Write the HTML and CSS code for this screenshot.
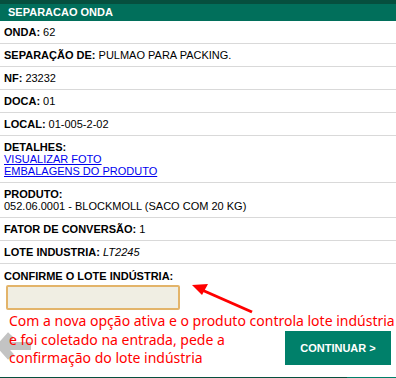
FILE: index.html
```html
<!DOCTYPE html>
<html lang="pt-BR">
<head>
    <meta charset="UTF-8">
    <title>Separação Onda</title>
    <link rel="stylesheet" href="styles.css">
</head>
<body>
    <div class="page">
        <div class="topo"></div>
        <div class="titulo">SEPARACAO ONDA</div>

        <div class="linha"><b>ONDA:</b> 62</div>
        <div class="linha"><b>SEPARAÇÃO DE:</b> PULMAO PARA PACKING.</div>
        <div class="linha"><b>NF:</b> 23232</div>
        <div class="linha"><b>DOCA:</b> 01</div>
        <div class="linha"><b>LOCAL:</b> 01-005-2-02</div>
        <div class="linha">
            <b>DETALHES:</b><br>
            <a href="#">VISUALIZAR FOTO</a><br>
            <a href="#">EMBALAGENS DO PRODUTO</a>
        </div>
        <div class="linha"><b>PRODUTO:</b><br>052.06.0001 - BLOCKMOLL (SACO COM 20 KG)</div>
        <div class="linha"><b>FATOR DE CONVERSÃO:</b> 1</div>
        <div class="linha"><b>LOTE INDUSTRIA:</b> <i>LT2245</i></div>
        <div class="confirma">
            <b>CONFIRME O LOTE INDÚSTRIA:</b>
            <input type="text" class="campo">
        </div>

        <div class="rodape">
            <svg class="voltar" width="36" height="30" viewBox="0 0 36 30">
                <polyline points="15,4 5,15 15,26" fill="none" stroke="#c3c3c3" stroke-width="8"/>
                <line x1="6" y1="15" x2="35" y2="15" stroke="#c3c3c3" stroke-width="8"/>
            </svg>
            <button class="continuar">CONTINUAR &gt;</button>
        </div>
        <div class="barra"></div>

        <!-- anotação -->
        <svg class="seta" width="70" height="36" viewBox="0 0 70 36">
            <line x1="62" y1="31" x2="12" y2="9" stroke="#f00" stroke-width="3"/>
            <polygon points="2,4 18,3 12,14" fill="#f00"/>
        </svg>
        <p class="nota">Com a nova opção ativa e o produto controla lote indústria<br>e foi coletado na entrada, pede a<br>confirmação do lote indústria</p>
    </div>
</body>
</html>
```

FILE: styles.css
```css
body {
    margin: 0;
    padding: 0;
    background-color: white;
    color: black;
    font-family: 'Liberation Sans', Arial, sans-serif;
    font-size: 11px;
}

.page {
    position: relative;
    width: 396px;
    height: 378px;
    overflow: hidden;
}

.topo {
    height: 4px;
    background-color: #064f3e;
}

.titulo {
    height: 17px;
    line-height: 17px;
    padding-left: 8px;
    background-color: #016f5b;
    color: white;
    font-weight: bold;
}

.linha {
    padding: 5px 4px;
    line-height: 12px;
    border-bottom: 1px solid #d9d9d9;
}

.linha b,
.confirma b {
    font-weight: bold;
}

.linha a {
    color: #0000ee;
}

.confirma {
    padding: 6px 4px 0;
    line-height: 12px;
}

.campo {
    display: block;
    box-sizing: border-box;
    width: 174px;
    height: 25px;
    margin: 3px 0 0 2px;
    background-color: #f0eee3;
    border: 2px solid #e3b46a;
    border-radius: 2px;
}

.rodape {
    display: flex;
    justify-content: space-between;
    align-items: flex-start;
    margin-top: 21px;
    padding-right: 5px;
    height: 34px;
}

.voltar {
    margin-left: -4px;
}

.continuar {
    width: 106px;
    height: 34px;
    border: none;
    background-color: #00806a;
    color: white;
    font-family: 'Liberation Sans', Arial, sans-serif;
    font-size: 11px;
    font-weight: bold;
}

.barra {
    margin-top: 12px;
    height: 2px;
    background: linear-gradient(to right, #064f3e 347px, #00806a 347px);
}

.seta {
    position: absolute;
    left: 190px;
    top: 281px;
}

.nota {
    position: absolute;
    left: 9px;
    top: 312px;
    margin: 0;
    color: #f00;
    font-family: 'Noto Sans', sans-serif;
    font-size: 14px;
    line-height: 18.5px;
    white-space: nowrap;
}
```
